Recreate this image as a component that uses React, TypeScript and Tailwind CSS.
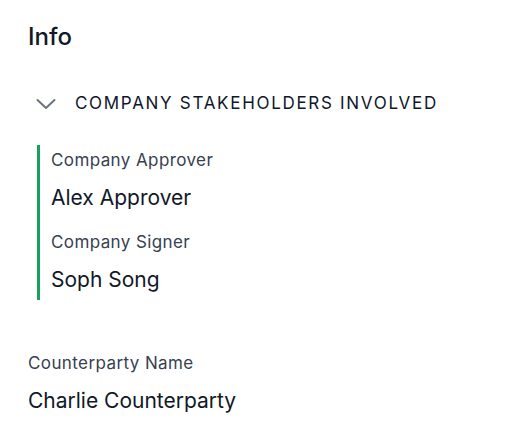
const Field = ({ label, value }: { label: string; value: string }) => (
  <div className="flex flex-col gap-3">
    <span className="text-[17px] leading-6 tracking-[0.4px] text-[#374151]">{label}</span>
    <span className="text-[21px] leading-7 text-[#111827]">{value}</span>
  </div>
)

export default function App() {
  return (
    <div className="min-h-screen bg-white px-7 pt-[21px] font-['Inter',sans-serif]">
      <h2 className="text-2xl leading-8 font-medium text-[#111827]">Info</h2>

      <button className="mt-[38px] flex items-center gap-[19px] pl-2">
        <svg width="20" height="12" viewBox="0 0 20 12" fill="none" className="mt-0.5">
          <path d="M1.5 2 L10 10 L18.5 2" stroke="#6b7280" strokeWidth="2" strokeLinecap="round" strokeLinejoin="round" />
        </svg>
        <span className="text-[17px] leading-6 uppercase tracking-[1.7px] text-[#0f172a]">
          Company Stakeholders Involved
        </span>
      </button>

      <div className="mt-[30px] ml-[9px] flex flex-col gap-[18px] border-l-[3px] border-[#18a05e] pt-[3px] pb-1.5 pl-[11px]">
        <Field label="Company Approver" value="Alex Approver" />
        <Field label="Company Signer" value="Soph Song" />
      </div>

      <div className="mt-[51px]">
        <Field label="Counterparty Name" value="Charlie Counterparty" />
      </div>
    </div>
  )
}
